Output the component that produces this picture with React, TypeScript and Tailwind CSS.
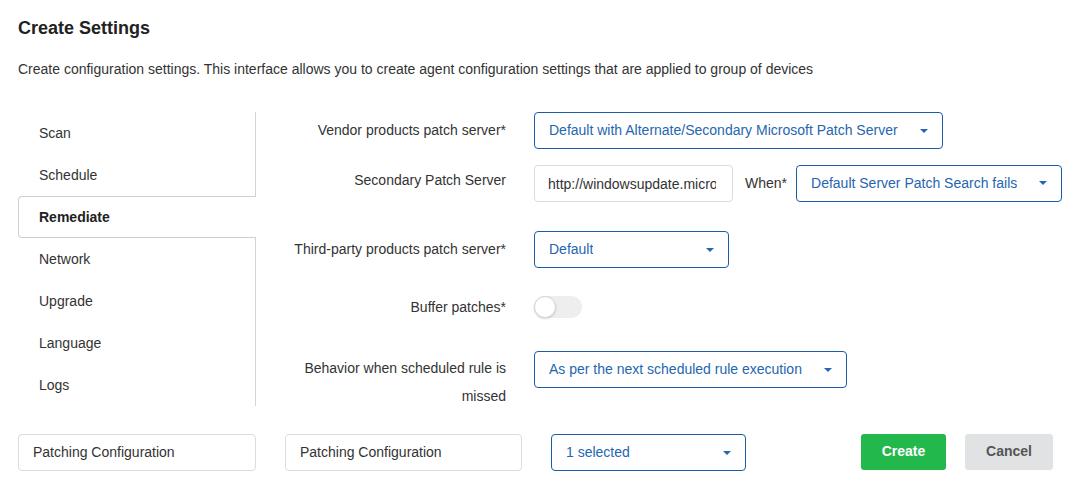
import React from "react";

const font = { fontFamily: '"Liberation Sans", Arial, sans-serif' };

function Caret() {
  return (
    <svg width="8" height="4" viewBox="0 0 8 4" className="shrink-0">
      <path d="M0 0 H8 L4 4 Z" fill="#2566b0" />
    </svg>
  );
}

function Select({ value, w }: { value: string; w: string }) {
  return (
    <div
      className={`${w} h-[37px] shrink-0 border border-[#1c5ca5] rounded-[4px] flex items-center justify-between pl-[14px] pr-[14px] text-[14px] text-[#2566b0] bg-white`}
    >
      <span className="whitespace-nowrap overflow-hidden">{value}</span>
      <Caret />
    </div>
  );
}

const navItems = ["Scan", "Schedule", "Remediate", "Network", "Upgrade", "Language", "Logs"];

export default function App() {
  return (
    <div className="w-[1070px] h-[493px] bg-white text-[#333] overflow-hidden" style={font}>
      <div className="pl-[18px] pt-[16px]">
        <h1 className="text-[18px] leading-[24px] font-bold text-[#222]">Create Settings</h1>
        <p className="mt-[19px] text-[14px] leading-[20px] text-[#333]">
          Create configuration settings. This interface allows you to create agent configuration settings that are applied to group of devices
        </p>

        <div className="mt-[33px] flex items-start">
          {/* sidebar */}
          <div className="w-[238px] shrink-0 border-r border-[#d4d4d4] flex flex-col">
            {navItems.map((n) =>
              n === "Remediate" ? (
                <div
                  key={n}
                  className="h-[42px] -mr-px bg-white border border-r-0 border-[#cfcfcf] rounded-l-[4px] flex items-center pl-[20px] text-[14px] font-bold text-[#222]"
                >
                  {n}
                </div>
              ) : (
                <div key={n} className="h-[42px] flex items-center pl-[21px] text-[14px] text-[#333]">
                  {n}
                </div>
              )
            )}
          </div>

          {/* form */}
          <div className="flex flex-col text-[14px]">
            <div className="flex items-start">
              <div className="w-[250px] text-right leading-[28px] pt-[4px]">Vendor products patch server*</div>
              <div className="ml-[28px]">
                <Select w="w-[409px]" value="Default with Alternate/Secondary Microsoft Patch Server" />
              </div>
            </div>

            <div className="flex items-start mt-[15px]">
              <div className="w-[250px] text-right leading-[28px] pt-[2px]">Secondary Patch Server</div>
              <div className="ml-[28px] flex items-center">
                <input
                  readOnly
                  value="http://windowsupdate.microsoft.com"
                  className="w-[199px] h-[37px] mt-[1px] border border-[#dcdcdc] rounded-[4px] pl-[13px] pr-[16px] text-[14px] text-[#333] outline-none bg-white"
                  style={font}
                />
                <span className="ml-[12px] mr-[9px] text-[#333]">When*</span>
                <Select w="w-[266px]" value="Default Server Patch Search fails" />
              </div>
            </div>

            <div className="flex items-start mt-[29px]">
              <div className="w-[250px] text-right leading-[28px] pt-[4px]">Third-party products patch server*</div>
              <div className="ml-[28px]">
                <Select w="w-[195px]" value="Default" />
              </div>
            </div>

            <div className="flex items-center mt-[25px]">
              <div className="w-[250px] text-right leading-[28px]">Buffer patches*</div>
              <div className="ml-[28px] w-[48px] h-[22px] rounded-full bg-[#eeeeee] relative">
                <div className="absolute left-0 top-0 w-[22px] h-[22px] rounded-full bg-white border border-[#d6d6d6] shadow-[0_1px_2px_rgba(0,0,0,0.15)]" />
              </div>
            </div>

            <div className="flex items-start mt-[30px]">
              <div className="w-[250px] text-right leading-[28px] pt-[3px]">
                Behavior when scheduled rule is
                <br />
                missed
              </div>
              <div className="ml-[28px]">
                <Select w="w-[313px]" value="As per the next scheduled rule execution" />
              </div>
            </div>
          </div>
        </div>

        {/* bottom row */}
        <div className="mt-[24px] flex items-center">
          <div className="w-[238px] h-[37px] border border-[#dcdcdc] rounded-[4px] flex items-center pl-[14px] text-[14px] text-[#333]">
            Patching Configuration
          </div>
          <div className="ml-[29px] w-[237px] h-[37px] border border-[#dcdcdc] rounded-[4px] flex items-center pl-[14px] text-[14px] text-[#333]">
            Patching Configuration
          </div>
          <div className="ml-[29px]">
            <Select w="w-[195px]" value="1 selected" />
          </div>
          <button
            className="ml-[115px] w-[85px] h-[36px] rounded-[3px] bg-[#22b84b] text-white text-[14px] font-bold -mt-[2px]"
            style={font}
          >
            Create
          </button>
          <button
            className="ml-[19px] w-[88px] h-[36px] rounded-[3px] bg-[#e1e2e4] text-[#555] text-[14px] font-bold -mt-[2px]"
            style={font}
          >
            Cancel
          </button>
        </div>
      </div>
    </div>
  );
}
